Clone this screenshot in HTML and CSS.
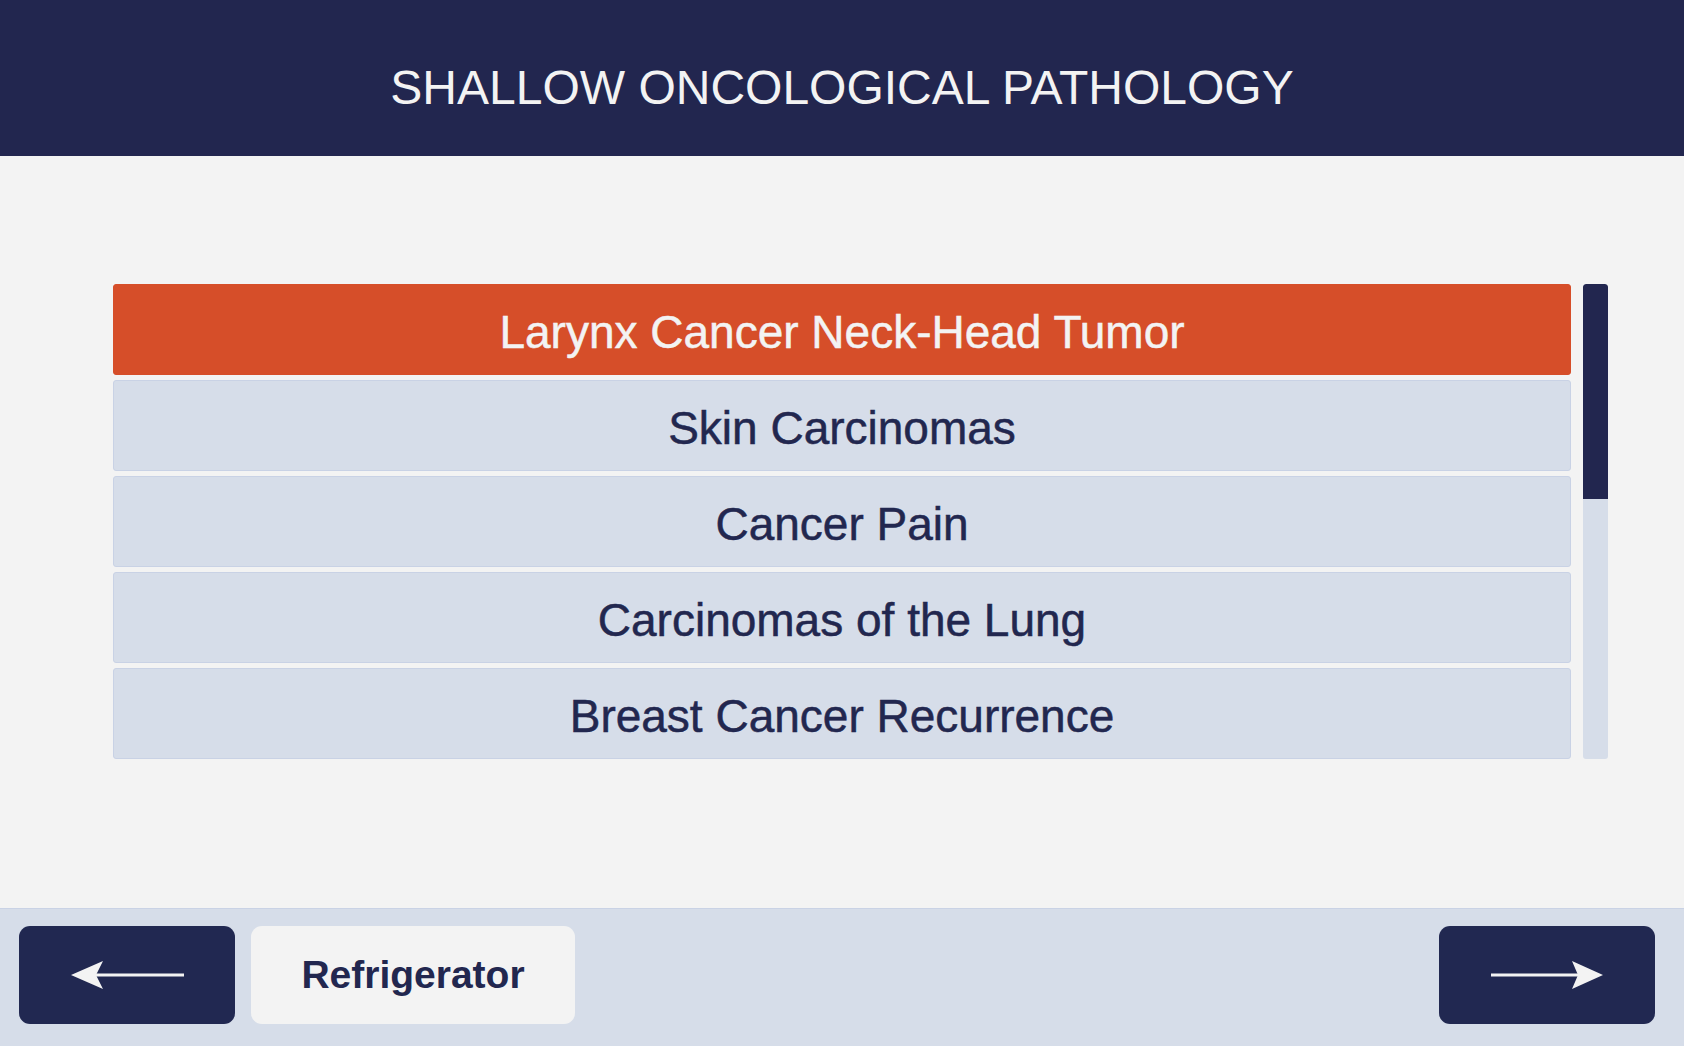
FILE: index.html
```html
<!DOCTYPE html>
<html lang="en">
<head>
  <meta charset="UTF-8">
  <meta name="viewport" content="width=device-width, initial-scale=1.0">
  <title>Shallow Oncological Pathology</title>
  <link rel="stylesheet" href="styles.css">
</head>
<body>
  <header class="topbar">
    <h1>SHALLOW ONCOLOGICAL PATHOLOGY</h1>
  </header>

  <main class="content">
    <div class="list-wrap">
      <ul class="topic-list">
        <li class="topic active">Larynx Cancer Neck-Head Tumor</li>
        <li class="topic">Skin Carcinomas</li>
        <li class="topic">Cancer Pain</li>
        <li class="topic">Carcinomas of the Lung</li>
        <li class="topic">Breast Cancer Recurrence</li>
      </ul>
      <div class="scroll-track">
        <div class="scroll-thumb"></div>
      </div>
    </div>
  </main>

  <footer class="bottombar">
    <button class="nav-btn" aria-label="Back">
      <svg width="113" height="28" viewBox="0 0 113 28">
        <rect x="24" y="12.5" width="89" height="3" fill="#f3f3f3"/>
        <polygon points="0,14 32,0 25,14 32,28" fill="#f3f3f3"/>
      </svg>
    </button>
    <button class="label-btn">Refrigerator</button>
    <div class="spacer"></div>
    <button class="nav-btn" aria-label="Next">
      <svg width="113" height="28" viewBox="0 0 113 28">
        <rect x="0" y="12.5" width="88" height="3" fill="#f3f3f3"/>
        <polygon points="112,14 81,0 87,14 81,28" fill="#f3f3f3"/>
      </svg>
    </button>
  </footer>
</body>
</html>
```

FILE: styles.css
```css
html, body {
  height: 100%;
}
body {
  margin: 0;
  display: flex;
  flex-direction: column;
  background-color: #f3f3f3;
  font-family: "Liberation Sans", Arial, sans-serif;
  color: #22274f;
}

.topbar {
  height: 156px;
  box-sizing: border-box;
  padding-top: 60px;
  background-color: #22264f;
  text-align: center;
  flex-shrink: 0;
}
.topbar h1 {
  margin: 0;
  font-size: 48px;
  font-weight: normal;
  line-height: normal;
  color: #f3f3f3;
}

.content {
  flex: 1;
  padding: 128px 76px 0 113px;
}
.list-wrap {
  display: grid;
  grid-template-columns: 1fr 25px;
  column-gap: 12px;
}
.topic-list {
  list-style: none;
  margin: 0;
  padding: 0;
  display: flex;
  flex-direction: column;
  gap: 5px;
}
.topic {
  height: 91px;
  box-sizing: border-box;
  padding-top: 5px;
  display: flex;
  align-items: center;
  justify-content: center;
  background-color: #d6dde9;
  border: 1px solid #c9d2e5;
  border-radius: 3px;
  font-size: 46px;
  -webkit-text-stroke: 0.5px currentColor;
}
.topic.active {
  background-color: #d64e29;
  border-color: #d64e29;
  color: #f3f3f3;
}

.scroll-track {
  background-color: #d6dde9;
  border-radius: 3px;
  overflow: hidden;
}
.scroll-thumb {
  height: 215px;
  background-color: #22264f;
  border-radius: 3px 3px 0 0;
}

.bottombar {
  height: 138px;
  box-sizing: border-box;
  flex-shrink: 0;
  display: flex;
  align-items: flex-start;
  gap: 16px;
  padding: 17px 29px 0 19px;
  background-color: #d6dde9;
  border-top: 1px solid #c9d2e5;
}
.spacer {
  flex: 1;
}
.nav-btn,
.label-btn {
  height: 98px;
  border: none;
  border-radius: 11px;
  display: flex;
  align-items: center;
  justify-content: center;
  cursor: pointer;
  padding: 0;
}
.nav-btn {
  width: 216px;
  background-color: #212851;
}
.label-btn {
  width: 324px;
  background-color: #f3f3f3;
  font-family: "Liberation Sans", Arial, sans-serif;
  font-size: 39px;
  font-weight: bold;
  color: #22274f;
}
```
